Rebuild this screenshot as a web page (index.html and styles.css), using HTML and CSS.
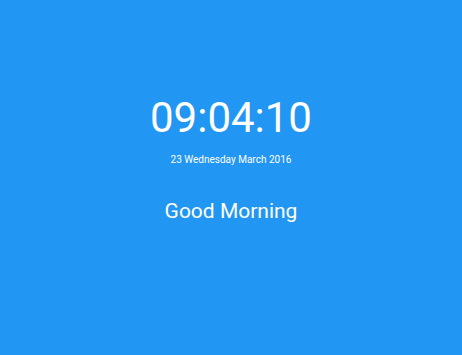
FILE: index.html
```html
<!DOCTYPE html>
<html>
  <head>
    <meta charset="utf-8">
    <link rel="stylesheet" href="styles.css">
  </head>
  <body>
    <div class="screen">
      <div class="clock">09:04:10</div>
      <div class="date">23 Wednesday March 2016</div>
      <div class="greeting">Good Morning</div>
    </div>
  </body>
</html>
```

FILE: styles.css
```css
html, body { margin: 0; height: 100%; }
body     { background: #2196F3; color: #fff; font-family: Roboto, "Liberation Sans", sans-serif; }
.screen  { display: flex; flex-direction: column; align-items: center; padding-top: 92px; }
.clock   { font-size: 42px; line-height: 52px; }
.date    { font-size: 10px; line-height: 14px; margin-top: 9px; }
.greeting { font-size: 21px; line-height: 24px; margin-top: 32px; }
```
